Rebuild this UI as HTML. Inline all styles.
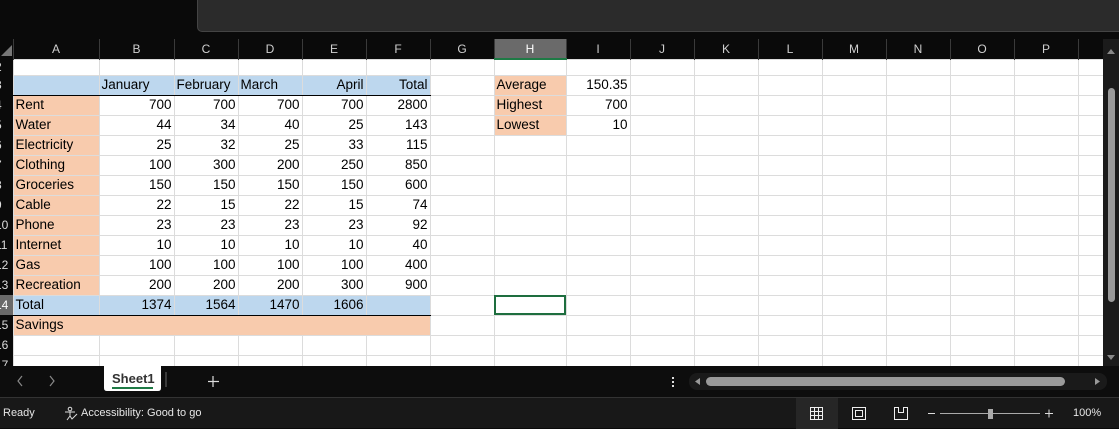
<!DOCTYPE html>
<html><head><meta charset="utf-8"><style>
*{margin:0;padding:0;box-sizing:border-box}
body{width:1119px;height:428px;background:#0a0a0a;position:relative;overflow:hidden;font-family:"Liberation Sans",sans-serif}
.topbox{position:absolute;left:197px;top:-2px;width:930px;height:34px;background:#2b2b2b;border:1px solid #444;border-radius:0 0 0 5px}
table{position:absolute;left:0;top:39px;border-collapse:collapse;table-layout:fixed;width:1103px;font-size:13.5px}
td{border:1px solid #dcdcdc;height:20px;overflow:hidden;white-space:nowrap;padding:0 2px;color:#000;background:#fff;line-height:18px}
tr.s td{height:16px;line-height:14px}
tr.h td{background:#0a0a0a;color:#cfcfcf;text-align:center;border:none;border-right:1px solid #3a3a3a;font-size:12px}
td.rh{background:#0a0a0a;color:#ddd;border:none;text-align:left;padding:0;font-size:12px;text-indent:-5px}
.r{text-align:right}
.b{background:#bdd7ee}
.p{background:#f8cbad}
td.k{border-top:1.5px solid #000;border-bottom:1.5px solid #000}
.sel{outline:2px solid #1e6e3f;outline-offset:-2px}
.vs{position:absolute;left:1103px;top:39px;width:16px;height:327px;background:#1b1b1b}
.tabs{position:absolute;left:0;top:366px;width:1119px;height:31px;background:#0d0d0d}
.status{position:absolute;left:0;top:397px;width:1119px;height:31px;background:#181818;border-top:1px solid #333;color:#e6e6e6;font-size:11px}
</style></head><body>
<div class="topbox"></div>
<table>
<colgroup><col style="width:13px"><col style="width:86px"><col style="width:75px"><col style="width:64px"><col style="width:64px"><col style="width:64px"><col style="width:64px"><col style="width:64px"><col style="width:72px"><col style="width:64px"><col style="width:64px"><col style="width:64px"><col style="width:64px"><col style="width:64px"><col style="width:64px"><col style="width:64px"><col style="width:64px"><col style="width:25px"></colgroup>
<tr class="h"><td style="position:relative"><svg width="12" height="12" style="position:absolute;left:1px;top:6px"><path d="M11 0 L11 11 L0 11Z" fill="#777"/></svg></td><td>A</td><td>B</td><td>C</td><td>D</td><td>E</td><td>F</td><td>G</td><td style="background:#6a6a6a;color:#fff;border-bottom:2px solid #1e7a45">H</td><td>I</td><td>J</td><td>K</td><td>L</td><td>M</td><td>N</td><td>O</td><td>P</td><td></td></tr>
<tr class="s"><td class="rh">2</td><td></td><td></td><td></td><td></td><td></td><td></td><td></td><td></td><td></td><td></td><td></td><td></td><td></td><td></td><td></td><td></td><td></td></tr>
<tr><td class="rh">3</td><td class="b k"></td><td class="b k">January</td><td class="b k">February</td><td class="b k">March</td><td class="b k r">April</td><td class="b k r">Total</td><td></td><td class="p">Average</td><td class="r">150.35</td><td></td><td></td><td></td><td></td><td></td><td></td><td></td><td></td></tr>
<tr><td class="rh">4</td><td class="p">Rent</td><td class="r">700</td><td class="r">700</td><td class="r">700</td><td class="r">700</td><td class="r">2800</td><td></td><td class="p">Highest</td><td class="r">700</td><td></td><td></td><td></td><td></td><td></td><td></td><td></td><td></td></tr>
<tr><td class="rh">5</td><td class="p">Water</td><td class="r">44</td><td class="r">34</td><td class="r">40</td><td class="r">25</td><td class="r">143</td><td></td><td class="p">Lowest</td><td class="r">10</td><td></td><td></td><td></td><td></td><td></td><td></td><td></td><td></td></tr>
<tr><td class="rh">6</td><td class="p">Electricity</td><td class="r">25</td><td class="r">32</td><td class="r">25</td><td class="r">33</td><td class="r">115</td><td></td><td></td><td></td><td></td><td></td><td></td><td></td><td></td><td></td><td></td><td></td></tr>
<tr><td class="rh">7</td><td class="p">Clothing</td><td class="r">100</td><td class="r">300</td><td class="r">200</td><td class="r">250</td><td class="r">850</td><td></td><td></td><td></td><td></td><td></td><td></td><td></td><td></td><td></td><td></td><td></td></tr>
<tr><td class="rh">8</td><td class="p">Groceries</td><td class="r">150</td><td class="r">150</td><td class="r">150</td><td class="r">150</td><td class="r">600</td><td></td><td></td><td></td><td></td><td></td><td></td><td></td><td></td><td></td><td></td><td></td></tr>
<tr><td class="rh">9</td><td class="p">Cable</td><td class="r">22</td><td class="r">15</td><td class="r">22</td><td class="r">15</td><td class="r">74</td><td></td><td></td><td></td><td></td><td></td><td></td><td></td><td></td><td></td><td></td><td></td></tr>
<tr><td class="rh">10</td><td class="p">Phone</td><td class="r">23</td><td class="r">23</td><td class="r">23</td><td class="r">23</td><td class="r">92</td><td></td><td></td><td></td><td></td><td></td><td></td><td></td><td></td><td></td><td></td><td></td></tr>
<tr><td class="rh">11</td><td class="p">Internet</td><td class="r">10</td><td class="r">10</td><td class="r">10</td><td class="r">10</td><td class="r">40</td><td></td><td></td><td></td><td></td><td></td><td></td><td></td><td></td><td></td><td></td><td></td></tr>
<tr><td class="rh">12</td><td class="p">Gas</td><td class="r">100</td><td class="r">100</td><td class="r">100</td><td class="r">100</td><td class="r">400</td><td></td><td></td><td></td><td></td><td></td><td></td><td></td><td></td><td></td><td></td><td></td></tr>
<tr><td class="rh">13</td><td class="p">Recreation</td><td class="r">200</td><td class="r">200</td><td class="r">200</td><td class="r">300</td><td class="r">900</td><td></td><td></td><td></td><td></td><td></td><td></td><td></td><td></td><td></td><td></td><td></td></tr>
<tr><td class="rh" style="background:#6a6a6a;color:#fff">14</td><td class="b k">Total</td><td class="b k r">1374</td><td class="b k r">1564</td><td class="b k r">1470</td><td class="b k r">1606</td><td class="b k"></td><td></td><td class="sel"></td><td></td><td></td><td></td><td></td><td></td><td></td><td></td><td></td><td></td></tr>
<tr><td class="rh">15</td><td class="p" style="border-right-color:#f8cbad">Savings</td><td class="p" style="border-right-color:#f8cbad"></td><td class="p" style="border-right-color:#f8cbad"></td><td class="p" style="border-right-color:#f8cbad"></td><td class="p" style="border-right-color:#f8cbad"></td><td class="p"></td><td></td><td></td><td></td><td></td><td></td><td></td><td></td><td></td><td></td><td></td><td></td></tr>
<tr><td class="rh">16</td><td></td><td></td><td></td><td></td><td></td><td></td><td></td><td></td><td></td><td></td><td></td><td></td><td></td><td></td><td></td><td></td><td></td></tr>
<tr><td class="rh">17</td><td></td><td></td><td></td><td></td><td></td><td></td><td></td><td></td><td></td><td></td><td></td><td></td><td></td><td></td><td></td><td></td><td></td></tr>
</table>
<div class="vs">
<svg width="16" height="327"><path d="M4 15 L8 10 L12 15Z" fill="#888"/><rect x="5" y="49" width="7" height="214" rx="3.5" fill="#9a9a9a"/><path d="M4 316 L8 321 L12 316Z" fill="#888"/></svg>
</div>
<div class="tabs">
<svg width="1119" height="31" style="position:absolute;left:0;top:0">
<path d="M22 10 L18 15 L22 20" stroke="#888" fill="none" stroke-width="1.2"/>
<path d="M50 10 L54 15 L50 20" stroke="#888" fill="none" stroke-width="1.2"/>
<path d="M104 0 L161 0 L161 22 Q161 25 158 25 L107 25 Q104 25 104 22Z" fill="#fff"/>
<rect x="112" y="21" width="41" height="2" fill="#1e7a45"/>
<line x1="166" y1="6" x2="166" y2="21" stroke="#666"/>
<path d="M213 10 V21 M208 15.5 H219" stroke="#ddd" stroke-width="1.2"/>
<rect x="672" y="11" width="2" height="2" fill="#ddd"/><rect x="672" y="15" width="2" height="2" fill="#ddd"/><rect x="672" y="19" width="2" height="2" fill="#ddd"/>
<rect x="689" y="7" width="418" height="17" rx="8" fill="#1a1a1a"/>
<path d="M700 12 L695 15.5 L700 19Z" fill="#999"/>
<rect x="706" y="11" width="359" height="9" rx="4.5" fill="#9a9a9a"/>
<path d="M1095 12 L1100 15.5 L1095 19Z" fill="#999"/>
</svg>
<div style="position:absolute;left:112px;top:5px;font-size:13px;font-weight:bold;color:#333">Sheet1</div>
</div>
<div class="status">
<span style="position:absolute;left:3px;top:9px">Ready</span>
<svg width="16" height="16" style="position:absolute;left:63px;top:8px"><circle cx="7" cy="3" r="1.8" fill="none" stroke="#ddd"/><path d="M2 6 H12 M7 6 V10 L4 14 M7 10 L9 13 L14 8" stroke="#ddd" fill="none"/></svg>
<span style="position:absolute;left:81px;top:9px">Accessibility: Good to go</span>
<div style="position:absolute;left:796px;top:0;width:42px;height:31px;background:#262626"></div>
<svg width="320" height="31" style="position:absolute;left:799px;top:0">
<g stroke="#eee" fill="none" stroke-width="1"><rect x="11.5" y="9.5" width="12" height="12"/><path d="M11.5 13.5H23.5M11.5 17.5H23.5M15.5 9.5V21.5M19.5 9.5V21.5"/>
<rect x="53.5" y="9.5" width="13" height="12"/><rect x="56.5" y="12.5" width="7" height="6"/>
<path d="M95.5 9.5V21.5H108.5V9.5H104.5V14.5H99.5V9.5Z"/></g>
<path d="M129 15.5H136" stroke="#ddd"/>
<path d="M141 15.5H241" stroke="#aaa"/>
<rect x="189" y="11" width="5" height="10" fill="#aaa"/>
<path d="M246 15.5H254M250 11.5V19.5" stroke="#ddd"/>
</svg>
<span style="position:absolute;left:1073px;top:9px">100%</span>
</div>
</body></html>
